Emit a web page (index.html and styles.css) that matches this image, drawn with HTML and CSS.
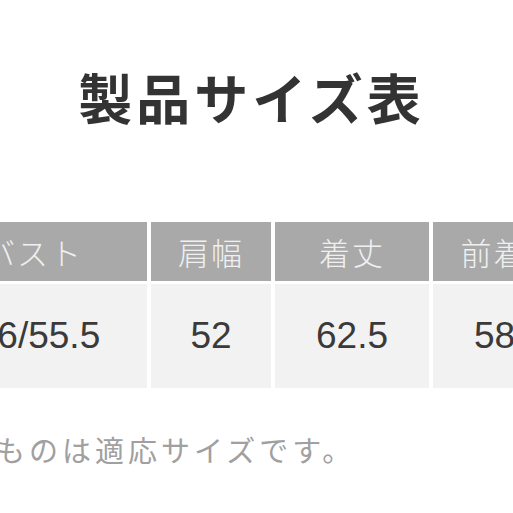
FILE: index.html
```html
<!DOCTYPE html>
<html lang="ja">
<head>
<meta charset="utf-8">
<link rel="stylesheet" href="styles.css">
</head>
<body>
<div class="page">
  <h1 class="title">製品サイズ表</h1>
  <div class="table-wrap">
    <div class="size-table">
      <div class="cell head">バスト</div>
      <div class="cell head">肩幅</div>
      <div class="cell head">着丈</div>
      <div class="cell head">前着丈</div>
      <div class="cell data first">56/55.5</div>
      <div class="cell data">52</div>
      <div class="cell data">62.5</div>
      <div class="cell data">58.5</div>
    </div>
  </div>
  <p class="note">ものは適応サイズです。</p>
</div>
</body>
</html>
```
FILE: styles.css
```css
html, body {
  margin: 0;
  padding: 0;
  background: #ffffff;
}
.page {
  width: 513px;
  height: 513px;
  overflow: hidden;
  font-family: "Noto Sans CJK JP", "Liberation Sans", sans-serif;
}
.title {
  margin: 0;
  padding-top: 64px;
  padding-right: 10px;
  text-align: center;
  font-size: 54px;
  line-height: 66px;
  letter-spacing: 4px;
  font-weight: 700;
  color: #333333;
}
.table-wrap {
  margin-top: 92px;
  overflow: hidden;
}
.size-table {
  display: grid;
  grid-template-columns: 227px 120px 154px 154px;
  grid-template-rows: 59px 104px;
  column-gap: 4px;
  row-gap: 3px;
  margin-left: -80px;
  width: max-content;
}
.cell {
  display: flex;
  align-items: center;
  justify-content: center;
}
.head {
  background: #a9a9a9;
  color: #f0f0f0;
  font-size: 31px;
  font-weight: 300;
  letter-spacing: 2px;
}
.data {
  background: #f2f2f2;
  color: #3a3a3a;
  font-family: "Liberation Sans", "Noto Sans CJK JP", sans-serif;
  font-size: 37px;
}
.data.first {
  padding-left: 10px;
}
.note {
  margin: 41px 0 0 -4px;
  font-size: 29px;
  line-height: 40px;
  letter-spacing: 4px;
  color: #a0a0a0;
  white-space: nowrap;
}
```
